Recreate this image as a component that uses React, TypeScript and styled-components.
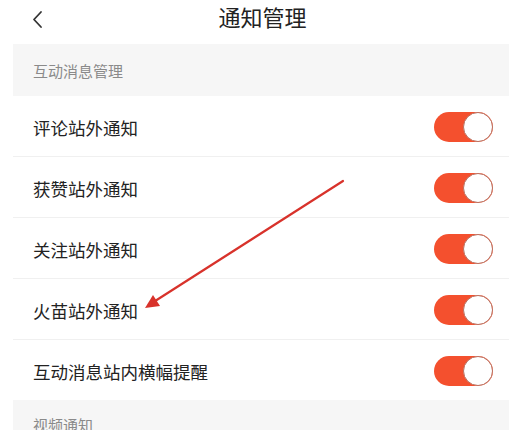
import React from "react";
import styled, { createGlobalStyle } from "styled-components";

const GlobalStyle = createGlobalStyle`
  html, body {
    margin: 0;
    padding: 0;
    background: #ffffff;
  }
  body {
    font-family: "Noto Sans CJK SC", "Noto Sans", sans-serif;
  }
`;

const Page = styled.div`
  position: relative;
  width: 509px;
  height: 430px;
  overflow: hidden;
  background: #ffffff;
`;

const Header = styled.div`
  display: flex;
  align-items: center;
  justify-content: center;
  position: relative;
  height: 44px;
`;

const BackButton = styled.div`
  position: absolute;
  left: 31px;
  top: 9px;
  width: 14px;
  height: 20px;
  color: #333333;
`;

const Title = styled.div`
  font-size: 22px;
  color: #222222;
  line-height: 30px;
  margin-top: -12px;
  padding-left: 16px;
`;

const Content = styled.div`
  margin-left: 13px;
`;

const SectionBand = styled.div<{ $height: number }>`
  display: flex;
  align-items: center;
  height: ${({ $height }) => $height}px;
  padding-left: 20px;
  background: #f6f6f6;
  font-size: 15px;
  color: #8a8a8a;
`;

const Row = styled.div<{ $last?: boolean }>`
  display: flex;
  align-items: center;
  justify-content: space-between;
  height: 60px;
  padding: 0 16px 0 20px;
  border-bottom: ${({ $last }) => ($last ? "none" : "1px solid #f0f0f0")};
  box-sizing: content-box;
`;

const RowLabel = styled.span`
  font-size: 17.5px;
  color: #222222;
  margin-top: 3px;
`;

const SwitchTrack = styled.div<{ $on: boolean }>`
  display: flex;
  align-items: center;
  justify-content: ${({ $on }) => ($on ? "flex-end" : "flex-start")};
  width: 59px;
  height: 30px;
  border-radius: 15px;
  background: ${({ $on }) => ($on ? "#f4502e" : "#e5e5e5")};
  margin-top: 1px;
`;

const SwitchKnob = styled.div`
  width: 28px;
  height: 28px;
  border-radius: 50%;
  background: #ffffff;
  border: 1px solid #b9705f;
`;

const ArrowLayer = styled.svg`
  position: absolute;
  left: 0;
  top: 0;
  pointer-events: none;
`;

const items = [
  "评论站外通知",
  "获赞站外通知",
  "关注站外通知",
  "火苗站外通知",
  "互动消息站内横幅提醒",
];

const Switch: React.FC<{ on: boolean }> = ({ on }) => (
  <SwitchTrack $on={on}>
    <SwitchKnob />
  </SwitchTrack>
);

const App: React.FC = () => {
  return (
    <Page>
      <GlobalStyle />
      <Header>
        <BackButton>
          <svg width="14" height="20" viewBox="0 0 14 20">
            <path d="M10 3 L3 10.5 L10 18" fill="none" stroke="#333" strokeWidth="1.8" strokeLinecap="round" strokeLinejoin="round" />
          </svg>
        </BackButton>
        <Title>通知管理</Title>
      </Header>
      <Content>
        <SectionBand $height={52}>互动消息管理</SectionBand>
        {items.map((label, i) => (
          <Row key={label} $last={i === items.length - 1}>
            <RowLabel>{label}</RowLabel>
            <Switch on />
          </Row>
        ))}
        <SectionBand $height={52} style={{ alignItems: "flex-start", paddingTop: 14 }}>
          视频通知
        </SectionBand>
      </Content>
      <ArrowLayer width="509" height="430" viewBox="0 0 509 430">
        <line x1="343" y1="181" x2="152" y2="303" stroke="#d8322b" strokeWidth="2.2" strokeLinecap="round" />
        <polygon points="145,308 153,295 160,306" fill="#d8322b" />
      </ArrowLayer>
    </Page>
  );
};

export default App;
